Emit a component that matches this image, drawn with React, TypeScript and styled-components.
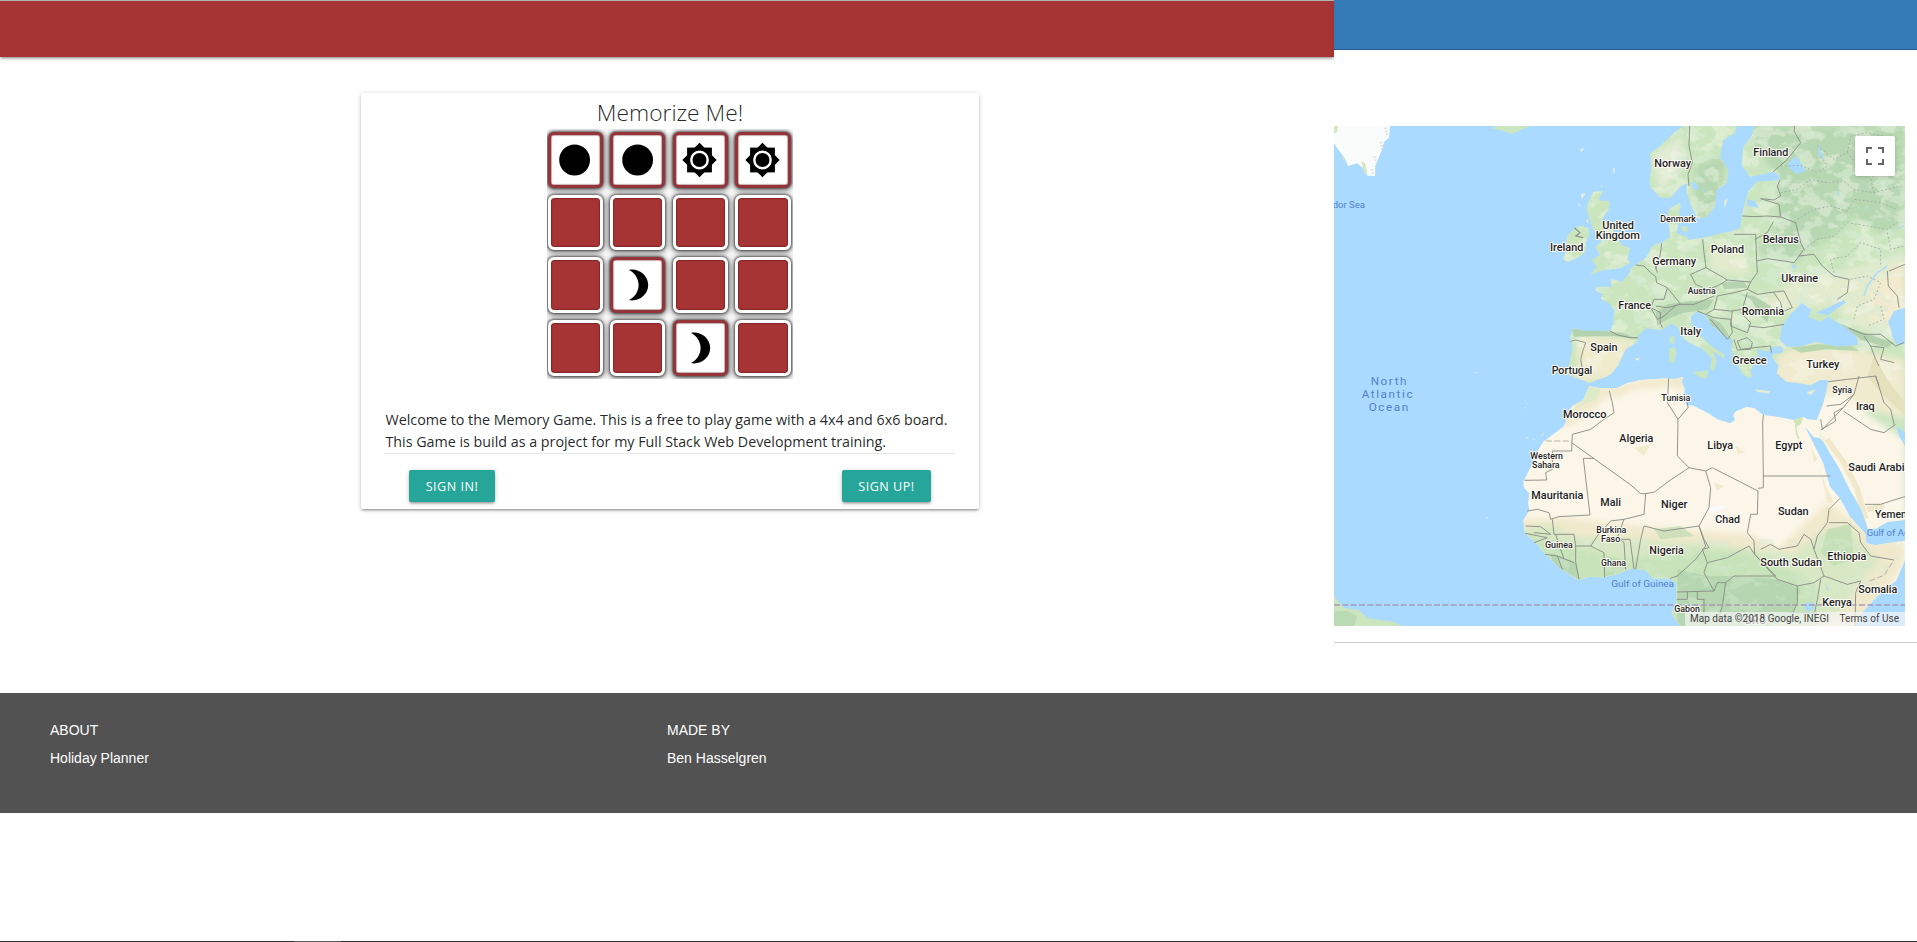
import React from 'react';
import styled, { createGlobalStyle } from 'styled-components';

const GlobalStyle = createGlobalStyle`
  * { box-sizing: border-box; }
  body { margin: 0; background: #fff; overflow: hidden; }
`;

const Page = styled.div`
  height: 942px;
  display: flex;
  flex-direction: column;
  font-family: 'Open Sans', 'Noto Sans', sans-serif;
  color: rgba(0, 0, 0, 0.87);
`;
const Content = styled.main`
  display: grid;
  grid-template-columns: 1334px 1fr;
  height: 693px;
`;
const GamePane = styled.section`
  overflow: hidden;
`;
const GameNav = styled.header`
  height: 57px;
  background: #a63434;
  border-top: 1px solid #b3b3b3;
  box-shadow: 0 2px 2px rgba(0, 0, 0, 0.14), 0 3px 1px -2px rgba(0, 0, 0, 0.12), 0 1px 5px rgba(0, 0, 0, 0.2);
`;
const Card = styled.article`
  width: 618px;
  height: 416px;
  margin: 36px 0 0 361px;
  padding: 0 24px;
  display: flex;
  flex-direction: column;
  border-radius: 2px;
  background: #fff;
  box-shadow: 0 2px 2px rgba(0, 0, 0, 0.14), 0 3px 1px -2px rgba(0, 0, 0, 0.12), 0 1px 5px rgba(0, 0, 0, 0.2);
`;
const Title = styled.h1`
  height: 36px;
  margin: 0;
  padding-top: 4px;
  text-align: center;
  font-size: 22.8px;
  line-height: 32px;
  font-weight: 300;
  white-space: nowrap;
`;
const Board = styled.div`
  width: 246px;
  height: 250px;
  margin: 0 auto;
  padding: 3px 0 0 0.5px;
  display: grid;
  grid-template-columns: repeat(4, 55.4px);
  grid-auto-rows: 55.6px;
  gap: 7.1px 7.2px;
  overflow: hidden;
`;
const Tile = styled.div<{ $open: boolean }>`
  display: flex;
  align-items: center;
  justify-content: center;
  border: 3px solid ${(p) => (p.$open ? '#93353a' : '#fff')};
  border-radius: 6px;
  background: ${(p) => (p.$open ? '#fff' : '#a63434')};
  background-clip: padding-box;
  box-shadow: 0 0 2px 0.5px rgba(0, 0, 0, 0.4), 0 1px 6px 1px rgba(0, 0, 0, 0.6)${(p) => (p.$open ? ', inset 0 0 1px 0.5px #a06a6a' : ', inset 0 0 1px 1px rgba(90, 20, 20, 0.45)')};
`;
const Welcome = styled.p`
  margin: 30px 0 0;
  height: 44px;
  padding-left: 0.5px;
  font-size: 14.3px;
  line-height: 22px;
  white-space: nowrap;
`;
const WelcomeLine = styled.span`
  display: block;
  letter-spacing: -0.01px;
`;
const Actions = styled.div`
  padding: 16px 24px 0;
  display: flex;
  justify-content: space-between;
  border-top: 1px solid #e6e6e6;
`;
const ActionButton = styled.button<{ $width: number }>`
  width: ${(p) => p.$width}px;
  height: 32px;
  padding: 0;
  border: 0;
  border-radius: 2px;
  background: #26a69a;
  color: #fff;
  font: 12.6px 'Open Sans', sans-serif;
  letter-spacing: 0.5px;
  text-transform: uppercase;
  box-shadow: 0 2px 2px rgba(0, 0, 0, 0.14), 0 3px 1px -2px rgba(0, 0, 0, 0.12), 0 1px 5px rgba(0, 0, 0, 0.2);
`;

const MapPane = styled.section`
  display: flex;
  flex-direction: column;
`;
const MapNav = styled.header`
  height: 50px;
  background: #337ab7;
  border-bottom: 1px solid #2e5a97;
`;
const MapFrame = styled.div`
  position: relative;
  width: 571px;
  height: 500px;
  margin-top: 76px;
  overflow: hidden;
  background: #aadaff;
`;
const MapDrawing = styled.svg`
  display: block;
  width: 571px;
  height: 500px;
`;
const FullscreenButton = styled.button`
  position: absolute;
  top: 10px;
  right: 10px;
  width: 40px;
  height: 40px;
  padding: 11px;
  border: 0;
  border-radius: 2px;
  background: #fff;
  box-shadow: 0 1px 4px -1px rgba(0, 0, 0, 0.3);
`;
const FullscreenGlyph = styled.svg`
  display: block;
`;
const Attribution = styled.div`
  position: absolute;
  right: 0;
  bottom: 0;
  width: 220px;
  height: 14px;
  padding: 0 6px 0 5px;
  display: flex;
  justify-content: space-between;
  background: rgba(245, 245, 245, 0.7);
  color: #444;
  font: 10px/14px Roboto, sans-serif;
  white-space: nowrap;
`;
const Credit = styled.span`
  letter-spacing: 0.02px;
`;
const Divider = styled.hr`
  width: 100%;
  height: 1px;
  margin: 16px 0 0;
  border: 0;
  background: #cfcfcf;
`;
const Footer = styled.footer`
  height: 120px;
  padding: 28px 50px 0;
  display: grid;
  grid-template-columns: 617px 1fr;
  background: #525252;
  color: #fff;
  font: 14px 'Liberation Sans', Arial, sans-serif;
`;
const FooterLine = styled.p`
  margin: 0;
  height: 28px;
  line-height: 18px;
`;
const Taskbar = styled.div`
  height: 1px;
  margin-top: auto;
  padding-left: 294px;
  background: #2f2f2f;
`;
const TaskbarItem = styled.div`
  width: 47px;
  height: 1px;
  background: #5c5c5c;
`;

const Disc = () => (
  <svg width="32" height="32" viewBox="-15.6 -16 32 32"><circle r="15.4" /></svg>
);
const Sun = () => (
  <svg width="36" height="36" viewBox="-17.5 -18 36 36">
    <rect x="-12.4" y="-12.4" width="24.8" height="24.8" />
    <path d="M0-17.2 17.2 0 0 17.2-17.2 0z" />
    <circle r="8.2" fill="none" stroke="#fff" strokeWidth="2.4" />
  </svg>
);
const Moon = () => (
  <svg width="32" height="32" viewBox="-14.2 -16 32 32">
    <path d="M-7.2-15.1C2-17 12-10 12 0S2 17-7.2 15.1C-1 12 2.4 6 2.4 0S-1-12-7.2-15.1z" />
  </svg>
);
const glyphs: Record<string, React.ReactNode> = { disc: <Disc />, sun: <Sun />, moon: <Moon /> };
const tiles = [
  'disc', 'disc', 'sun', 'sun',
  '', '', '', '',
  '', 'moon', '', '',
  '', '', 'moon', '',
];

const EURASIA =
  'M766 772 745 762 713 752 698 742 705 717 716 662 708 632 718 607 748 614 828 615 838 592 841 552 823 530 800 518 805 505 783 492 788 482 833 482 830 460 848 462 862 468 880 450 888 437 890 425 906 417 938 392 953 362 965 354 983 352 1008 332 1006 302 998 267 1008 247 1038 230 1040 245 1034 262 1040 272 1033 292 1028 322 1058 332 1062 342 1098 337 1123 332 1160 322 1188 317 1218 307 1223 272 1233 227 1243 197 1268 167 1300 164 1338 162 1335 147 1318 137 1288 145 1248 152 1223 117 1228 62 1253 30 1262 0H1713V1182L1660 1188 1628 1207 1603 1212 1593 1182 1583 1152 1548 1092 1513 1022 1488 982 1468 947 1456 937 1448 882 1468 832 1478 792 1483 762 1458 762 1430 778 1398 772 1358 767 1328 742 1334 720 1313 692 1328 672 1350 668 1338 660 1308 667 1303 678 1268 668 1275 690 1256 692 1280 715 1258 717 1248 737 1255 750 1246 757 1223 742 1208 712 1193 672 1193 642 1168 627 1128 592 1113 567 1088 557 1070 572 1073 597 1103 632 1128 657 1173 687 1168 697 1138 677 1148 707 1138 737 1128 727 1133 697 1103 667 1078 657 1048 637 1033 607 1013 592 983 612 938 607 913 627 910 647 873 672 853 717 833 742 818 752 788 762z';
const AFRICA =
  'M766 780 798 787 848 787 878 772 920 762 998 757 1020 760 1048 752 1043 767 1053 792 1043 812 1058 837 1080 840 1123 862 1150 880 1188 892 1203 882 1198 870 1203 857 1238 842 1262 847 1288 867 1330 872 1378 882 1408 872 1420 880 1448 882 1458 912 1456 937 1438 932 1413 902 1433 942 1468 1012 1488 1082 1518 1117 1548 1172 1593 1222 1598 1252 1625 1258 1658 1252 1713 1244V1302L1688 1362 1628 1412 1578 1467 1563 1500H1038L1013 1462 1028 1432 1028 1372 1008 1357 958 1357 933 1332 888 1327 858 1342 808 1354 765 1352 733 1362 678 1327 650 1300 633 1282 603 1247 573 1222 568 1182 586 1152 582 1130 586 1102 570 1085 568 1067 593 1017 610 975 628 947 688 902 697 885 693 872 715 840 748 822z';
const SCANDINAVIA =
  'M1208 0 1203 22 1168 42 1158 92 1183 132 1178 172 1148 192 1143 242 1118 272 1093 278 1083 262 1073 242 1058 202 1058 172 1038 182 1008 217 980 215 963 197 950 185 946 162 952 130 948 82 978 60 1023 17 1048 0z';
const BRITAIN =
  'M778 197 808 195 793 222 828 227 823 252 803 282 823 292 843 322 863 357 888 367 880 400 888 412 858 427 808 432 768 447 788 422 773 402 798 387 783 362 803 347 778 312 768 282 758 252 765 225z';
const IRELAND = 'M728 302 745 300 763 307 766 327 755 350 757 375 740 390 703 407 686 400 698 375 696 352 700 328z';

const BORDERS = [
  'M710 646 725 642 755 650 748 670 740 700 748 745',
  'M828 615 850 627 888 635 912 635',
  'M906 417 930 420 950 440 965 452 968 470 1000 485 990 520 960 520 950 545 980 560 978 590 985 605',
  'M958 400 970 440M983 352 978 390 965 430',
  'M1106 340 1110 380 1116 425 1070 445 1085 475 1120 490 1150 480',
  'M1116 425 1160 450 1180 462 1250 468 1270 440 1268 405 1265 325 1200 325',
  'M1225 270 1260 272 1300 270 1340 273 1335 235 1280 218 1320 222 1340 210 1330 180 1338 162',
  'M1318 137 1360 100 1400 50 1380 15 1382 0',
  'M1340 273 1385 290 1400 350 1410 370 1395 390 1440 385 1465 420 1500 450 1545 460 1540 500 1510 520',
  'M1268 405 1300 398 1350 405 1380 410 1395 390M1318 287 1300 320 1262 340',
  'M1250 468 1240 490 1270 505 1320 498 1350 495 1375 545 1350 555M1318 498 1340 530 1350 570',
  'M1240 490 1200 500 1150 510 1140 550 1190 555 1225 550 1240 500M1150 480 1180 462',
  'M965 540 1000 545 1040 535 1080 535 1140 510M1000 485 1040 535M950 545 970 580 990 570 1030 535',
  'M1140 550 1115 565 1090 555M1115 565 1140 575 1190 580 1195 620 1180 640 1130 580',
  'M1195 555 1190 600 1240 620 1250 590 1220 560M1242 600 1290 605 1350 595M1210 645 1220 670 1260 665 1310 660 1312 680M1210 645 1240 635 1255 650 1250 670 1210 672 1200 640',
  'M1067 0 1065 60 1075 110 1062 145 1065 180',
  'M1545 607 1590 625 1640 625 1685 660 1710 650M1590 630 1610 660 1650 665 1640 700 1680 710M1610 660 1625 700 1635 720',
  'M1660 435 1663 480 1690 510 1695 545M1713 415 1665 435',
  'M1483 767 1540 760 1625 750 1650 830 1670 850 1680 895M1625 750 1635 780',
  'M1478 840 1520 835 1560 805 1575 750M1560 805 1528 845 1465 910 1460 880M1528 855 1610 910 1650 920 1685 895M1460 912 1505 885 1500 860 1528 845',
  'M1593 1135 1640 1135 1670 1125 1713 1112',
  'M826 795 835 830 840 860 810 880 770 910 715 925 713 975 655 975 655 1030 635 1040 638 1062 572 1063',
  'M713 950 888 1075 920 1103 935 1103 962 1098 1005 1065 1065 1025 1030 990 1032 880 1000 830 1004 757M1032 880 1062 845 1060 830',
  'M748 997H780M748 997 768 1167 675 1172 650 1180 645 1160 610 1150 580 1155',
  'M1065 1025 1115 1035 1135 1025 1272 1095 1270 1165 1250 1165 1240 1220 1260 1245 1262 1285',
  'M1288 867 1286 890 1288 1050 1490 1050M1288 1050 1288 1085 1272 1087M1115 1035 1130 1085 1125 1145 1095 1200 990 1215 930 1200 920 1240 905 1330',
  'M935 1103 930 1165 870 1180 830 1185 790 1230 770 1260 725 1260 720 1225 660 1225 655 1180',
  'M575 1200 620 1202 650 1225 600 1220M573 1222 640 1235 600 1250M633 1285 670 1290 685 1330M725 1260 725 1310 735 1360M670 1290 720 1310M770 1260 810 1280 812 1354M870 1180 850 1235 870 1250 875 1330M850 1240 888 1240 900 1330M665 1225 680 1270 690 1300',
  'M1095 1200 1115 1260 1085 1300 1030 1350 1008 1357M1095 1200 1110 1240 1125 1265 1105 1270 1120 1310 1110 1340 1140 1395 1028 1398',
  'M1120 1310 1180 1295 1245 1260 1262 1285 1325 1350 1310 1350 1200 1350 1175 1370 1165 1440 1148 1490M1262 1285 1330 1360 1390 1380 1440 1370 1470 1350',
  'M1280 1270 1310 1255 1335 1270 1390 1260 1410 1225 1430 1240 1440 1270 1450 1230 1480 1190 1485 1150 1518 1117M1485 1190 1540 1190 1575 1220 1580 1250 1610 1290 1680 1302',
  'M1440 1270 1470 1350 1540 1375 1580 1365 1565 1400 1563 1500M1390 1380 1390 1430 1365 1490M1460 1360 1450 1420 1440 1470M1365 1460H1450',
  'M1028 1420H1060V1398M1090 1398V1420H1110V1440 1500M1140 1395 1150 1370 1175 1370',
];

/* text, left, right, baseline, font size */
type Label = [string, number, number, number, number];
const PLACES: Label[] = [
  ['Norway', 961, 1071, 123, 33], ['Finland', 1258, 1363, 90, 33], ['Denmark', 979, 1086, 288, 27],
  ['Poland', 1130, 1230, 381, 33], ['Belarus', 1286, 1394, 352, 33], ['Germany', 955, 1086, 417, 33],
  ['Ukraine', 1342, 1452, 468, 33], ['Austria', 1061, 1145, 503, 27], ['Romania', 1223, 1350, 567, 33],
  ['Italy', 1039, 1101, 627, 33], ['Greece', 1195, 1298, 713, 33], ['Turkey', 1417, 1516, 726, 33],
  ['United', 805, 900, 309, 33], ['Kingdom', 785, 918, 339, 33], ['Ireland', 648, 748, 375, 33],
  ['Spain', 769, 851, 675, 33], ['Portugal', 653, 775, 744, 33], ['France', 853, 951, 549, 33],
  ['Morocco', 687, 817, 876, 33], ['Western', 589, 687, 999, 27], ['Sahara', 594, 677, 1025, 27],
  ['Mauritania', 592, 748, 1119, 33], ['Mali', 799, 861, 1140, 33], ['Burkina', 787, 877, 1221, 27],
  ['Faso', 801, 859, 1248, 27], ['Guinea', 633, 716, 1266, 27], ['Ghana', 801, 876, 1319, 27],
  ['Tunisia', 982, 1069, 825, 27], ['Algeria', 856, 958, 948, 33], ['Libya', 1120, 1197, 969, 33],
  ['Egypt', 1324, 1405, 969, 33], ['Syria', 1495, 1554, 801, 27], ['Iraq', 1566, 1622, 852, 33],
  ['Saudi Arabia', 1543, 1729, 1035, 33], ['Yemen', 1623, 1718, 1176, 33], ['Niger', 981, 1060, 1146, 33],
  ['Chad', 1144, 1218, 1190, 33], ['Sudan', 1332, 1424, 1166, 33], ['Nigeria', 946, 1049, 1283, 33],
  ['South Sudan', 1279, 1464, 1319, 33], ['Ethiopia', 1480, 1597, 1302, 33], ['Somalia', 1573, 1690, 1400, 33],
  ['Kenya', 1465, 1553, 1440, 33], ['Gabon', 1021, 1098, 1457, 27], ['DRC', 1233, 1296, 1495, 30],
];
const WATERS: Label[] = [
  ['dor Sea', -4, 93, 247, 29], ['North', 112, 222, 778, 35], ['Atlantic', 85, 245, 817, 35],
  ['Ocean', 106, 228, 856, 35], ['Gulf of Guinea', 832, 1020, 1382, 29], ['Gulf of Aden', 1598, 1757, 1229, 29],
];

const Labels = ({ items }: { items: Label[] }) => (
  <>
    {items.map(([text, left, right, y, size]) => {
      const spaced = size === 35;
      return (
        <text key={text} x={spaced ? left - 2 : left} y={y} fontSize={size} {...(spaced
          ? { letterSpacing: 4.8 }
          : { textLength: right - left, lengthAdjust: 'spacingAndGlyphs' as const })}>{text}</text>
      );
    })}
  </>
);

const MapView = () => (
  <MapDrawing viewBox="0 0 1713 1500">
    <defs>
      <clipPath id="north"><path d={EURASIA} /><path d={SCANDINAVIA} /><path d={BRITAIN} /><path d={IRELAND} /></clipPath>
      <clipPath id="south"><path d={AFRICA} /></clipPath>
      <filter id="forest" x="0" y="0" width="1" height="1">
        <feTurbulence type="fractalNoise" baseFrequency="0.018 0.026" numOctaves="4" seed="7" />
        <feColorMatrix values="0 0 0 0 .69  0 0 0 0 .83  0 0 0 0 .66  9 0 0 0 -4.9" />
      </filter>
      <filter id="plain" x="0" y="0" width="1" height="1">
        <feTurbulence type="fractalNoise" baseFrequency="0.016 0.024" numOctaves="4" seed="22" />
        <feColorMatrix values="0 0 0 0 .91  0 0 0 0 .93  0 0 0 0 .82  9 0 0 0 -4.8" />
      </filter>
      <filter id="soft"><feGaussianBlur stdDeviation="9" /></filter>
    </defs>
    <rect width="1713" height="1500" fill="#aadaff" />

    <g fill="#cbe6bf">
      <path d={EURASIA} /><path d={SCANDINAVIA} /><path d={BRITAIN} /><path d={IRELAND} />
      <path d="M472 7 490 0H590L560 12 535 24 510 15z" />
      <path d="M0 1407 8 1422 33 1447 73 1452 103 1477 178 1487 203 1500H0z" />
      <path d="M0 1455 40 1455 70 1470 60 1500H0z" fill="#b9dab2" />
      <path d="M1008 632 1022 630 1020 655 1008 650zM1005 668 1022 662 1027 680 1020 712 1007 710z" />
      <path d="M1075 738 1110 735 1122 732 1118 760 1095 752zM1040 300 1062 302 1060 318 1045 315z" />
      <path d="M1265 790 1308 796 1305 802 1268 798zM1420 797 1445 790 1432 806 1420 803zM1170 225 1182 218 1172 245z" fill="#e6ecd0" />
      <path d="M740 206 755 200 745 220zM734 227 738 240 734 242zM738 70 752 66 742 78zM836 128 843 126 840 148zM756 284 765 276 760 292zM800 180 806 178 803 184zM900 698 918 695 912 704z" fill="#e9eed9" />
      <path d="M575 933 584 934 578 938zM596 940 601 940 598 944zM620 930 630 918 626 928zM420 738 432 740 425 742zM570 844h5v3h-5zM457 1174h4v4h-4z" fill="#e9eed9" />
    </g>
    <path d="M0 0H168L165 35 150 48 143 75 132 100 124 120 123 150 100 149 85 125 70 112 42 120 30 92 12 70 0 52z" fill="#fafbfb" />
    <path d="M0 0H12L9 18 0 24zM20 80 32 98 28 104zM82 103 94 114 100 145 90 140z" fill="#d5e6c1" />
    <path d="M154 5 160 28M140 48 146 70M121 92 128 112M113 130 117 145" stroke="#d7dcd7" strokeWidth="7" strokeDasharray="4 5" />

    <g clipPath="url(#north)">
      <g filter="url(#soft)">
        <path d="M1225 0H1713V295L1640 320 1560 270 1500 330 1430 370 1385 410 1300 400 1270 360 1330 300 1340 170z" fill="#b6d7b1" />
        <path d="M1085 120 1180 80 1150 280 1080 270z" fill="#b6d7b1" />
        <path d="M1370 470 1500 440 1713 380V650L1560 600 1500 540 1330 560 1230 590 1230 560z" fill="#e3ebcd" />
        <path d="M1130 370 1230 360 1250 450 1130 440z" fill="#e3ebcd" />
        <path d="M1610 480 1713 400V570L1660 620 1610 580z" fill="#f2ebcf" />
        <path d="M730 625 900 640 850 760 730 770z" fill="#efebcd" />
        <path d="M1330 690 1400 655 1560 670 1713 700V880L1500 820 1300 790z" fill="#f0eacf" />
        <path d="M1440 820 1530 800 1620 880 1713 940V1230H1580L1440 900z" fill="#fbf6e8" />
        <path d="M955 90 1040 30 1050 110 980 200z" fill="#e4ecd6" />
      </g>
      <rect width="1713" height="760" filter="url(#plain)" opacity=".4" />
      <rect width="1713" height="660" filter="url(#forest)" opacity=".6" />
      <path d="M965 560 1000 535 1080 525 1140 520 1120 550 1050 560 1000 580 970 600zM1220 505 1260 510 1310 540 1300 590 1280 570 1250 520zM1160 470 1230 465 1240 485 1170 490zM1120 570 1160 590 1200 650 1180 645 1130 600zM1510 590 1590 620 1680 650 1660 665 1580 640zM715 610 800 613 870 622 910 640 840 630 720 632z" fill="#abcca9" opacity=".8" />
      <path d="M1370 665 1450 655 1550 658 1575 675 1480 670 1400 680z" fill="#b9d7ad" />
      <path d="M1620 690 1660 760 1713 830V870L1640 800 1600 750z" fill="#e6e1bd" />
      <path d="M1478 940 1530 1010 1570 1090 1595 1180M1600 1150 1650 1140" stroke="#f0e8ca" strokeWidth="17" fill="none" />
    </g>

    <path d={AFRICA} fill="#fbf6e8" />
    <g clipPath="url(#south)">
      <path d="M766 775 840 785 880 770 1050 745 1060 800 1010 780 900 790 850 815 830 805 750 870 690 910 680 880z" fill="#f1e9cc" filter="url(#soft)" />
      <path d="M748 820 768 780 800 790 785 820 720 850z" fill="#deebc8" />
      <path d="M560 1180 700 1175 830 1190 960 1205 1100 1215 1250 1225 1330 1270 1480 1130 1550 1180 1713 1260V1300L1600 1500H1000L560 1300z" fill="#f1e9cc" filter="url(#soft)" />
      <path d="M560 1210 650 1195 720 1230 850 1235 1000 1245 1120 1250 1240 1270 1380 1285 1460 1220 1540 1195 1590 1260 1640 1310 1570 1370 1550 1430 1450 1500H1000L560 1320z" fill="#d8e8c4" filter="url(#soft)" />
      <path d="M570 1225 720 1260 810 1285 870 1300 980 1285 1090 1270 1240 1280 1390 1340 1450 1390 1440 1500H1000L700 1380z" fill="#c7e3b9" filter="url(#soft)" />
      <path d="M1030 1330 1120 1350 1200 1350 1330 1360 1400 1390 1370 1480 1300 1500H1030zM650 1280 730 1310 735 1360 660 1320z" fill="#b5d6b0" />
      <path d="M1480 1210 1550 1195 1560 1300 1500 1320 1460 1280zM820 1290 880 1310 860 1340 815 1350zM960 1210 1040 1200 1080 1230 980 1240z" fill="#bddbb2" opacity=".7" />
      <path d="M1378 876 1405 872 1400 892 1388 900zM1385 895 1388 925 1395 940" fill="#cfe4b9" stroke="#cfe4b9" strokeWidth="4" />
      <path d="M1120 1145 1150 1138 1176 1140 1150 1158 1110 1160z" fill="#fbfafa" />
      <path d="M900 965 950 955 930 990zM1140 1070 1170 1080 1150 1095zM1205 960 1235 980 1210 985zM1460 1040 1485 1100 1500 1130 1480 1130zM1430 960 1450 1000 1440 1010z" fill="#f2ebd0" />
      <rect y="1240" width="1713" height="260" filter="url(#forest)" opacity=".35" />
      <path d="M1412 1430 1438 1430 1440 1452 1415 1455zM1474 1365 1484 1395 1478 1393z" fill="#aadaff" />
    </g>

    <g fill="#aadaff">
      <path d="M1338 642 1343 602 1368 567 1403 532 1433 552 1423 572 1458 587 1483 572 1538 607 1568 632 1573 657 1508 662 1448 647 1398 662 1358 662zM1445 560 1480 545 1530 522 1535 530 1500 555 1482 568zM1298 677 1348 670 1345 680 1310 684z" />
      <path d="M1713 545 1680 555 1663 587 1670 610 1675 632 1690 660 1713 650zM1713 960 1695 930 1688 900 1713 920z" />
      <path d="M1360 115 1385 90 1400 110 1415 135 1390 145 1370 130zM1450 50 1462 80 1470 100 1455 92zM1505 180 1515 205 1522 210 1512 208zM1070 172 1085 168 1095 190 1080 192zM1108 175 1112 195 1108 198zM1598 235l4 20h-4zM1372 425l12-15v18zM1240 220 1262 225 1275 245 1240 240z" />
    </g>
    <path d="M1590 510 1600 480 1630 440 1660 420M1695 310 1710 298" stroke="#aadaff" strokeWidth="4" fill="none" />

    <g fill="none" stroke="#8b8e87" strokeWidth="2.8" strokeLinejoin="round">
      {BORDERS.map((d) => <path key={d} d={d} />)}
      <path d="M722 306 738 320 725 330 748 335" strokeWidth="3.5" />
    </g>
    <g fill="none" stroke="#a2aba4" strokeWidth="2.6" strokeDasharray="6 6">
      <path d="M1340 120 1400 118 1450 140 1480 120 1460 90M1450 60 1500 100 1540 80 1580 130 1620 90 1660 60M1340 200 1390 190 1430 160 1480 170 1530 165 1560 190 1620 200 1700 180M1390 280 1440 250 1490 240 1540 255 1560 220 1640 230 1690 250M1410 370 1450 340 1500 330 1540 290 1600 300 1660 310 1690 290M1500 440 1490 400 1540 390 1580 350 1640 370 1640 420M1550 460 1600 450 1640 470 1620 520 1570 540 1560 580M1540 80 1550 30 1600 20 1690 40M1620 200 1610 160 1660 110M1640 540 1650 580 1600 600M1660 320 1670 370 1713 360" />
    </g>
    <path d="M636 945H713M1606 1365 1650 1348 1680 1302" stroke="#b3b0a5" strokeWidth="3" strokeDasharray="18 7" fill="none" />
    <path d="M0 1437H1713" stroke="#a69bbb" strokeWidth="4.5" strokeDasharray="18 7" />

    <g fontFamily="Roboto, sans-serif" fontWeight="500" fill="#1e1e1e" stroke="#fffdf8" strokeWidth="6" strokeLinejoin="round" paintOrder="stroke">
      <Labels items={PLACES} />
    </g>
    <g fontFamily="Roboto, sans-serif" fill="#5381ca">
      <Labels items={WATERS} />
    </g>
  </MapDrawing>
);

export default function App() {
  return (
    <>
      <GlobalStyle />
      <Page>
        <Content>
          <GamePane>
            <GameNav />
            <Card>
              <Title>Memorize Me!</Title>
              <Board>
                {tiles.map((kind, i) => (
                  <Tile key={i} $open={kind !== ''}>{glyphs[kind]}</Tile>
                ))}
              </Board>
              <Welcome>
                <WelcomeLine>Welcome to the Memory Game. This is a free to play game with a 4x4 and 6x6 board.</WelcomeLine>
                <WelcomeLine>This Game is build as a project for my Full Stack Web Development training.</WelcomeLine>
              </Welcome>
              <Actions>
                <ActionButton $width={86}>Sign in!</ActionButton>
                <ActionButton $width={89}>Sign up!</ActionButton>
              </Actions>
            </Card>
          </GamePane>
          <MapPane>
            <MapNav />
            <MapFrame>
              <MapView />
              <FullscreenButton aria-label="Toggle fullscreen">
                <FullscreenGlyph width="18" height="18" viewBox="0 0 18 18" fill="none" stroke="#666" strokeWidth="2">
                  <path d="M1 6V1H6M12 1H17V6M17 12V17H12M6 17H1V12" />
                </FullscreenGlyph>
              </FullscreenButton>
              <Attribution>
                <Credit>Map data ©2018 Google, INEGI</Credit>
                <Credit>Terms of Use</Credit>
              </Attribution>
            </MapFrame>
            <Divider />
          </MapPane>
        </Content>
        <Footer>
          <div>
            <FooterLine>ABOUT</FooterLine>
            <FooterLine>Holiday Planner</FooterLine>
          </div>
          <div>
            <FooterLine>MADE BY</FooterLine>
            <FooterLine>Ben Hasselgren</FooterLine>
          </div>
        </Footer>
        <Taskbar><TaskbarItem /></Taskbar>
      </Page>
    </>
  );
}
